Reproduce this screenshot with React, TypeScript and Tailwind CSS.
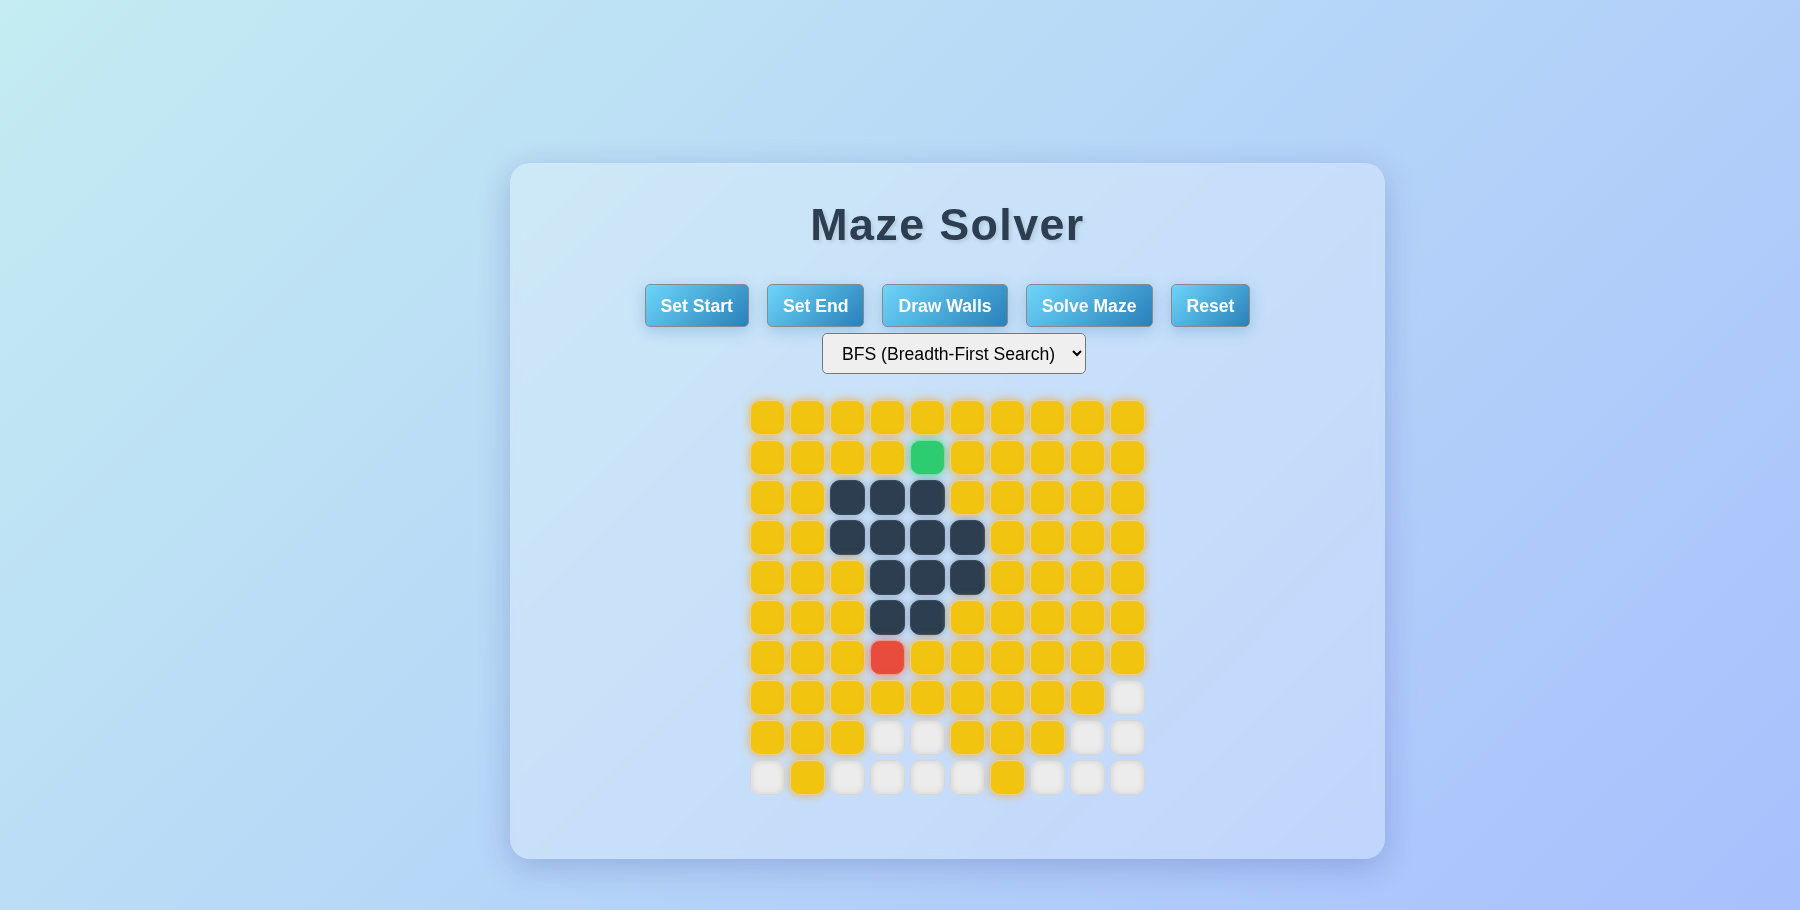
import React from "react";

const GRID = [
  "YYYYYYYYYY",
  "YYYYSYYYYY",
  "YYWWWYYYYY",
  "YYWWWWYYYY",
  "YYYWWWYYYY",
  "YYYWWYYYYY",
  "YYYXYYYYYY",
  "YYYYYYYYYE",
  "YYYEEYYYEE",
  "EYEEEEYEEE",
];

function cellClass(c: string): string {
  switch (c) {
    case "Y":
      return "bg-[#f1c40f] border-[#e9cf9a] shadow-[0_0_10px_rgba(243,156,18,0.7)]";
    case "W":
      return "bg-[#2c3e50] border-[#3a4a5c] shadow-[0_0_6px_rgba(44,62,80,0.4)]";
    case "S":
      return "bg-[#2ecc71] border-[#7fdca6] shadow-[0_0_10px_rgba(46,204,113,0.7)]";
    case "X":
      return "bg-[#e74c3c] border-[#e99a90] shadow-[0_0_10px_rgba(231,76,60,0.6)]";
    default:
      return "bg-[#ececec] border-[#d6d6d6] shadow-[inset_0_0_6px_rgba(0,0,0,0.12)]";
  }
}

const buttons = ["Set Start", "Set End", "Draw Walls", "Solve Maze", "Reset"];

export default function App() {
  return (
    <div
      className="w-full h-[910px] overflow-hidden bg-[linear-gradient(135deg,#c4ecf2_0%,#a8c0fd_100%)] pt-[163px] pl-[510px]"
      style={{ fontFamily: '"Liberation Sans", Arial, sans-serif' }}
    >
      <div className="w-[875px] h-[696px] rounded-[20px] bg-[rgba(255,255,255,0.25)] shadow-[0_8px_32px_rgba(31,38,135,0.22)] backdrop-blur-[4px] pt-[36px] flex flex-col items-center">
        <h1 className="text-[44.8px] leading-[51.5px] font-bold tracking-[1.4px] text-[#2c3e50] [text-shadow:2px_2px_4px_rgba(0,0,0,0.12)] m-0">
          Maze Solver
        </h1>
        <div className="mt-[33.5px] flex gap-[18px] justify-center">
          {buttons.map((b) => (
            <button
              key={b}
              className="h-[43px] px-[15px] border border-[#8a8a8a] rounded-[5px] bg-[linear-gradient(135deg,#6dd5fa_0%,#2980b9_100%)] text-white font-bold text-[17.6px] leading-[20px] shadow-[0_4px_15px_rgba(41,128,185,0.3)] cursor-pointer"
            >
              {b}
            </button>
          ))}
        </div>
        <select
          className="mt-[6px] ml-[13px] w-[264px] h-[41px] pl-[15px] pr-[6px] border border-[#767676] rounded-[5px] bg-[#efefef] text-[17.6px] text-black"
          style={{ fontFamily: '"Liberation Sans", Arial, sans-serif' }}
          defaultValue="bfs"
        >
          <option value="bfs">BFS (Breadth-First Search)</option>
          <option value="dfs">DFS (Depth-First Search)</option>
        </select>
        <div className="mt-[26px] grid grid-cols-[repeat(10,35px)] gap-[5px]">
          {GRID.flatMap((row, r) =>
            row.split("").map((c, i) => (
              <div
                key={`${r}-${i}`}
                className={`w-[35px] h-[35px] rounded-[10px] border ${cellClass(c)}`}
              />
            ))
          )}
        </div>
      </div>
    </div>
  );
}
